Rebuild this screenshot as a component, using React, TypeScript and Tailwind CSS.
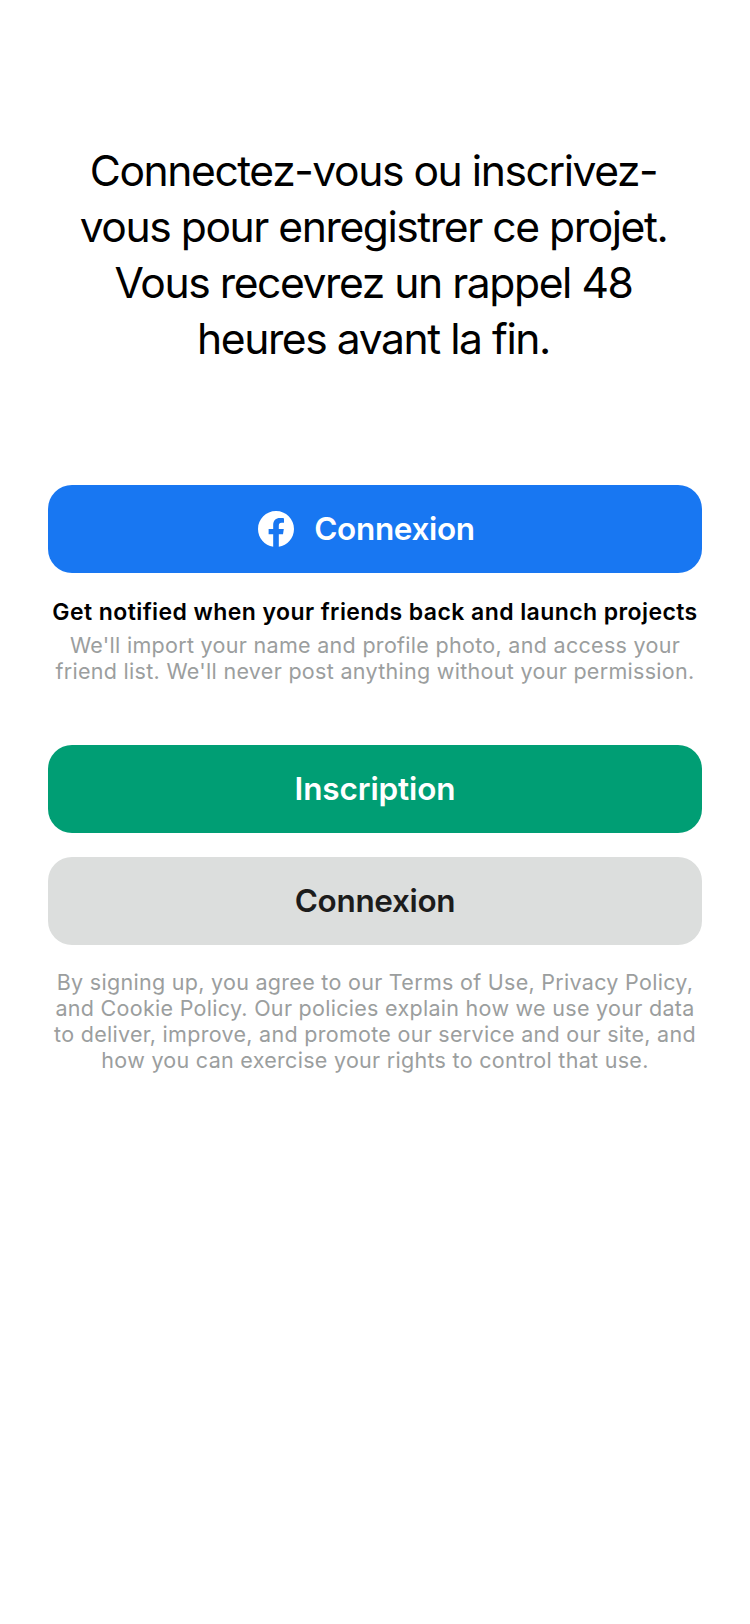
import type { ReactNode } from "react";

function Line({ children }: { children: ReactNode }) {
  return <span className="block whitespace-nowrap">{children}</span>;
}

function FacebookMark() {
  return (
    <svg viewBox="8 8 496 496" className="size-9 shrink-0" fill="currentColor" aria-hidden="true">
      <path d="M504 256C504 119 393 8 256 8S8 119 8 256c0 123.78 90.69 226.38 209.25 245V327.69h-63V256h63v-54.64c0-62.15 37-96.48 93.67-96.48 27.14 0 55.52 4.84 55.52 4.84v61h-31.28c-30.8 0-40.41 19.12-40.41 38.73V256h68.78l-11 71.69h-57.78V501C413.31 482.38 504 379.78 504 256z" />
    </svg>
  );
}

function Button({ className, children }: { className: string; children: ReactNode }) {
  return (
    <button
      type="button"
      className={`flex h-22 w-full shrink-0 items-center justify-center rounded-3xl text-[31.5px] leading-10 font-semibold ${className}`}
    >
      {children}
    </button>
  );
}

export default function App() {
  return (
    <main className="flex h-[1624px] w-[750px] flex-col items-center bg-white px-12 pt-[143px] font-['Inter',sans-serif] text-black">
      <h1 className="pr-[3px] text-center text-[42.6px] leading-14 font-normal tracking-[-1.44px]">
        <Line>Connectez-vous ou inscrivez-</Line>
        <Line>vous pour enregistrer ce projet.</Line>
        <Line>Vous recevrez un rappel 48</Line>
        <Line>heures avant la fin.</Line>
      </h1>

      <Button className="mt-[118px] gap-5 bg-[#1877f2] pr-[17px] tracking-[-0.33px] text-white">
        <FacebookMark />
        Connexion
      </Button>
      <p className="mt-6.5 text-center text-[23px] leading-6.5 font-semibold tracking-[0.42px]">
        <Line>Get notified when your friends back and launch projects</Line>
      </p>
      <p className="mt-[7px] text-center text-[21.5px] leading-6.5 tracking-[0.3px] text-[#9b9e9e]">
        <Line>We'll import your name and profile photo, and access your</Line>
        <Line>friend list. We'll never post anything without your permission.</Line>
      </p>

      <Button className="mt-[61px] bg-[#009e74] tracking-[-0.12px] text-white">Inscription</Button>
      <Button className="mt-6 bg-[#dcdedd] tracking-[-0.33px] text-[#1c1c1c]">Connexion</Button>
      <p className="mt-6 text-center text-[21.5px] leading-6.5 tracking-[0.29px] text-[#9b9e9e]">
        <Line>By signing up, you agree to our Terms of Use, Privacy Policy,</Line>
        <Line>and Cookie Policy. Our policies explain how we use your data</Line>
        <Line>to deliver, improve, and promote our service and our site, and</Line>
        <Line>how you can exercise your rights to control that use.</Line>
      </p>
    </main>
  );
}
